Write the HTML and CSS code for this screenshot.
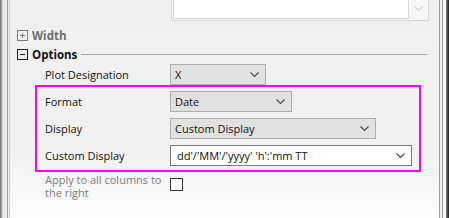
FILE: index.html
```html
<!DOCTYPE html>
<html>
<head>
<meta charset="utf-8">
<link rel="stylesheet" href="styles.css">
</head>
<body>
<div class="window">
  <div class="edge-left"></div>
  <div class="panel">
    <div class="listbox">
      <div class="lb-inner"></div>
      <div class="lb-btn">
        <svg width="9" height="6" viewBox="0 0 9 6"><polyline points="0.5,0.5 4.5,4.5 8.5,0.5" fill="none" stroke="#d4d4d4" stroke-width="1.2"/></svg>
      </div>
    </div>

    <div class="group dim">
      <span class="tog"><svg width="11" height="11" viewBox="0 0 11 11"><rect x="0.5" y="0.5" width="10" height="10" fill="none" stroke="#7a7a7a"/><path d="M3 5.5H8M5.5 3V8" stroke="#7a7a7a"/></svg></span>
      <span class="gtitle">Width</span>
    </div>

    <div class="group">
      <span class="tog"><svg width="11" height="11" viewBox="0 0 11 11"><rect x="0.5" y="0.5" width="10" height="10" fill="none" stroke="#222"/><path d="M3 5.5H8" stroke="#222"/></svg></span>
      <span class="gtitle">Options</span>
      <span class="rule"></span>
    </div>

    <div class="row">
      <span class="lbl">Plot Designation</span>
      <div class="combo w-x"><span class="val">X</span><svg class="chev" width="9" height="6" viewBox="0 0 9 6"><polyline points="0.5,0.5 4.5,4.5 8.5,0.5" fill="none" stroke="#444" stroke-width="1.1"/></svg></div>
    </div>

    <div class="highlight">
      <div class="row">
        <span class="lbl">Format</span>
        <div class="combo w-date"><span class="val">Date</span><svg class="chev" width="9" height="6" viewBox="0 0 9 6"><polyline points="0.5,0.5 4.5,4.5 8.5,0.5" fill="none" stroke="#444" stroke-width="1.1"/></svg></div>
      </div>
      <div class="row">
        <span class="lbl">Display</span>
        <div class="combo w-disp"><span class="val">Custom Display</span><svg class="chev" width="9" height="6" viewBox="0 0 9 6"><polyline points="0.5,0.5 4.5,4.5 8.5,0.5" fill="none" stroke="#444" stroke-width="1.1"/></svg></div>
      </div>
      <div class="row">
        <span class="lbl">Custom Display</span>
        <div class="combo edit w-custom"><span class="val">dd'/'MM'/'yyyy' 'h':'mm TT</span><svg class="chev" width="9" height="6" viewBox="0 0 9 6"><polyline points="0.5,0.5 4.5,4.5 8.5,0.5" fill="none" stroke="#444" stroke-width="1.1"/></svg></div>
      </div>
    </div>

    <div class="row apply">
      <span class="lbl muted">Apply to all columns to the right</span>
      <span class="check"></span>
    </div>
  </div>
  <div class="edge-right"></div>
</div>
</body>
</html>
```

FILE: styles.css
```css
html, body {
  margin: 0;
  padding: 0;
}
body {
  width: 449px;
  height: 218px;
  overflow: hidden;
  font-family: "Open Sans", "Noto Sans", sans-serif;
  font-size: 11px;
  color: #111;
}
.window {
  display: flex;
  height: 218px;
}
.edge-left {
  width: 10px;
  flex: none;
  background: linear-gradient(to right,
    #7c7c7c 0, #7c7c7c 1px,
    #a8a8a8 1px, #a8a8a8 2px,
    #d0d0d0 2px, #d0d0d0 3px,
    #ececec 3px, #ececec 7px,
    #9c9c9c 7px, #9c9c9c 8px,
    #f2f2f2 8px, #f2f2f2 9px,
    #cfcfcf 9px, #cfcfcf 10px);
}
.edge-right {
  width: 10px;
  flex: none;
  background: linear-gradient(to right,
    #9e9e9e 0, #9e9e9e 1px,
    #f2f2f2 1px, #f2f2f2 3px,
    #9e9e9e 3px, #9e9e9e 4px,
    #f7f7f7 4px, #f7f7f7 7px,
    #8a8a8a 7px, #4a4a4a 8.5px, #1e1e1e 10px);
}
.panel {
  flex: 1;
  display: flex;
  flex-direction: column;
  background: linear-gradient(#f0f0f0 0, #f1f1f1 70%, #fdfdfd 100%);
}
.listbox {
  margin-left: 161px;
  width: 255px;
  height: 19px;
  border: 1px solid #d9d9d9;
  border-top: none;
  padding: 0 0 1px 1px;
  display: flex;
  background: #f6f6f6;
}
.lb-inner {
  flex: 1;
  background: #fff;
  border: 1px solid #dadada;
  border-top: none;
}
.lb-btn {
  width: 19px;
  display: flex;
  align-items: center;
  justify-content: center;
  padding-bottom: 2px;
}
.group {
  display: flex;
  align-items: center;
  height: 19px;
  margin-left: 7px;
}
.group:first-of-type { }
.listbox + .group {
  margin-top: 5px;
}
.tog {
  width: 11px;
  height: 11px;
  display: flex;
}
.gtitle {
  margin-left: 4px;
  font-weight: 700;
  font-size: 11.5px;
  color: #111;
}
.dim .gtitle {
  color: #6e6e6e;
}
.rule {
  flex: 1;
  height: 1px;
  background: #a9a9a9;
  margin-left: 4px;
  margin-right: 12px;
  margin-top: 0px;
}
.row {
  display: flex;
  align-items: center;
  height: 21px;
  margin-left: 35px;
}
.row + .row {
  margin-top: 6px;
}
.lbl {
  width: 125px;
  flex: none;
}
.combo {
  height: 21px;
  box-sizing: border-box;
  border: 1px solid #adadad;
  background: #e1e1e1;
  display: flex;
  align-items: center;
  padding: 0 6px 0 4px;
}
.combo .val {
  flex: 1;
  white-space: nowrap;
}
.combo.edit {
  background: #fff;
  border-color: #7a7a7a;
  padding-left: 6px;
}
.chev {
  flex: none;
}
.w-x { width: 96px; }
.w-date { width: 122px; }
.w-disp { width: 206px; }
.w-custom { width: 242px; }
.highlight {
  margin-left: 25px;
  width: 386px;
  box-sizing: border-box;
  border: 2px solid #ff00ff;
  padding: 4px 0 4px 0;
  margin-top: 0;
}
.row + .highlight {
  margin-top: 0;
}
.highlight .row {
  margin-left: 8px;
}
.row.apply {
  height: auto;
  align-items: flex-start;
  margin-top: 0;
  padding-top: 1px;
}
.muted {
  color: #7d7d7d;
  line-height: 13px;
  width: 120px;
  margin-right: 5px;
}
.check {
  width: 13px;
  height: 13px;
  box-sizing: border-box;
  border: 1px solid #333;
  background: #fff;
  margin-top: 5px;
}
```
